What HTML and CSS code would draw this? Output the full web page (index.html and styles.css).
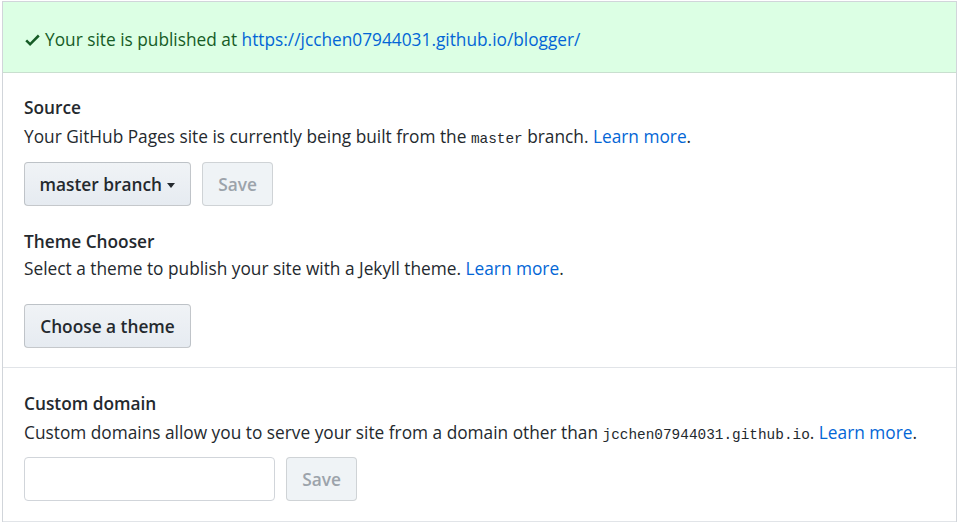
FILE: index.html
```html
<!DOCTYPE html>
<html>
<head>
<meta charset="utf-8">
<link rel="stylesheet" href="styles.css">
</head>
<body>
<div class="box">
  <div class="flash">
    <svg class="check" viewBox="0 0 12 10" width="15" height="12"><path d="M12 2l-8 8-4-4 1.5-1.5L4 7l6.5-6.5L12 2z" fill="#165c26"/></svg>
    <span>Your site is published at <a href="#">https://jcchen07944031.github.io/blogger/</a></span>
  </div>
  <div class="section">
    <h3 class="title">Source</h3>
    <p class="desc">Your GitHub Pages site is currently being built from the <code>master</code> branch. <a href="#">Learn more</a>.</p>
    <div class="row">
      <button class="btn btn-branch">master branch <span class="caret"></span></button>
      <button class="btn btn-disabled">Save</button>
    </div>
    <h3 class="title title-theme">Theme Chooser</h3>
    <p class="desc desc-theme">Select a theme to publish your site with a Jekyll theme. <a href="#">Learn more</a>.</p>
    <div class="row row-theme">
      <button class="btn btn-branch">Choose a theme</button>
    </div>
  </div>
  <div class="section section-domain">
    <h3 class="title">Custom domain</h3>
    <p class="desc">Custom domains allow you to serve your site from a domain other than <code>jcchen07944031.github.io</code>. <a href="#">Learn more</a>.</p>
    <div class="row row-domain">
      <input class="input" type="text">
      <button class="btn btn-disabled">Save</button>
    </div>
  </div>
</div>
</body>
</html>
```
FILE: styles.css
```css
html, body {
  margin: 0;
  background: #fff;
}
body {
  font-family: "Open Sans", "Noto Sans", sans-serif;
  font-size: 17.3px;
  line-height: 24px;
  color: #24292e;
}
.box {
  margin: 1px 0 0 2px;
  width: 953px;
  border: 1px solid #d1d5da;
  border-bottom: none;
}
a {
  color: #0366d6;
  text-decoration: none;
}
.flash {
  background: #dcffe4;
  border-bottom: 1px solid #c9dfcf;
  color: #165c26;
  display: flex;
  align-items: center;
  padding: 5px 0 0 22px;
  box-sizing: border-box;
  height: 71px;
}
.check {
  margin-right: 5px;
  margin-top: 1px;
}
.section {
  padding: 23px 21px 19px;
  border-bottom: 1px solid #e1e4e8;
}
.section-domain {
  padding-top: 24px;
  padding-bottom: 20px;
}
.title {
  margin: 0;
  font-size: 17.3px;
  font-weight: 600;
  line-height: 24px;
}
.title-theme {
  margin-top: 24px;
}
.desc {
  margin: 5px 0 0;
}
.desc-theme {
  margin-top: 3px;
}
code {
  font-family: "Liberation Mono", "DejaVu Sans Mono", monospace;
  font-size: 14.4px;
}
.row {
  display: flex;
  gap: 11px;
  margin-top: 11px;
}
.row-theme {
  margin-top: 23px;
}
.row-domain {
  margin-top: 10px;
}
.btn {
  font-family: inherit;
  font-size: 17.3px;
  font-weight: 600;
  height: 44px;
  padding: 0 14px;
  border: 1px solid rgba(27, 31, 35, 0.2);
  border-radius: 4px;
  background: linear-gradient(#f0f3f6, #e6ebf1);
  color: #24292e;
}
.btn-branch {
  width: 167px;
}
.btn-disabled {
  width: 71px;
  background: #eff3f6;
  color: #9ca3ab;
  border-color: rgba(27, 31, 35, 0.15);
}
.caret {
  display: inline-block;
  width: 0;
  height: 0;
  border-left: 4px solid transparent;
  border-right: 4px solid transparent;
  border-top: 5px solid #24292e;
  vertical-align: middle;
  margin-left: 1px;
}
.input {
  width: 251px;
  height: 44px;
  box-sizing: border-box;
  border: 1px solid #d1d5da;
  border-radius: 4px;
  font-size: 16px;
}
```
